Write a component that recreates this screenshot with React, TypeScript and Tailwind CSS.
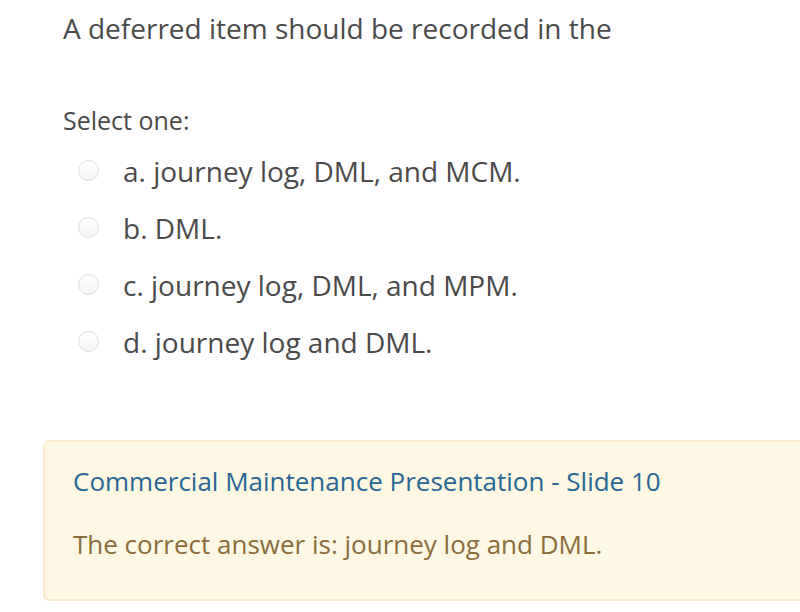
const options = [
  "a. journey log, DML, and MCM.",
  "b. DML.",
  "c. journey log, DML, and MPM.",
  "d. journey log and DML.",
];

export default function App() {
  return (
    <div
      className="w-[800px] h-[612px] overflow-hidden bg-white text-[#4a4a4a]"
      style={{ fontFamily: '"Open Sans", sans-serif' }}
    >
      <div className="pl-[63px] pt-[10px]">
        <p className="text-[28px] leading-[36px]">A deferred item should be recorded in the</p>
        <p className="mt-[58px] text-[25px] leading-[32px]">Select one:</p>
        <div className="mt-[6px] flex flex-col">
          {options.map((opt) => (
            <label key={opt} className="flex items-center h-[57px]">
              <span className="ml-[15px] w-[21px] h-[21px] rounded-full border border-[#dcdcdc] bg-gradient-to-b from-white to-[#f4f4f4]" />
              <span className="ml-[24px] text-[28px] leading-[36px]">{opt}</span>
            </label>
          ))}
        </div>
      </div>
      <div className="ml-[43px] mt-[70px] w-[800px] h-[161px] rounded-[6px] border-2 border-[#faebcc] bg-[#fcf8e3] pl-[28px] pt-[21px]">
        <p className="text-[26px] leading-[36px] text-[#2a6595]">
          Commercial Maintenance Presentation - Slide 10
        </p>
        <p className="mt-[27px] text-[26px] leading-[36px] text-[#8a6d3b]">
          The correct answer is: journey log and DML.
        </p>
      </div>
    </div>
  );
}
